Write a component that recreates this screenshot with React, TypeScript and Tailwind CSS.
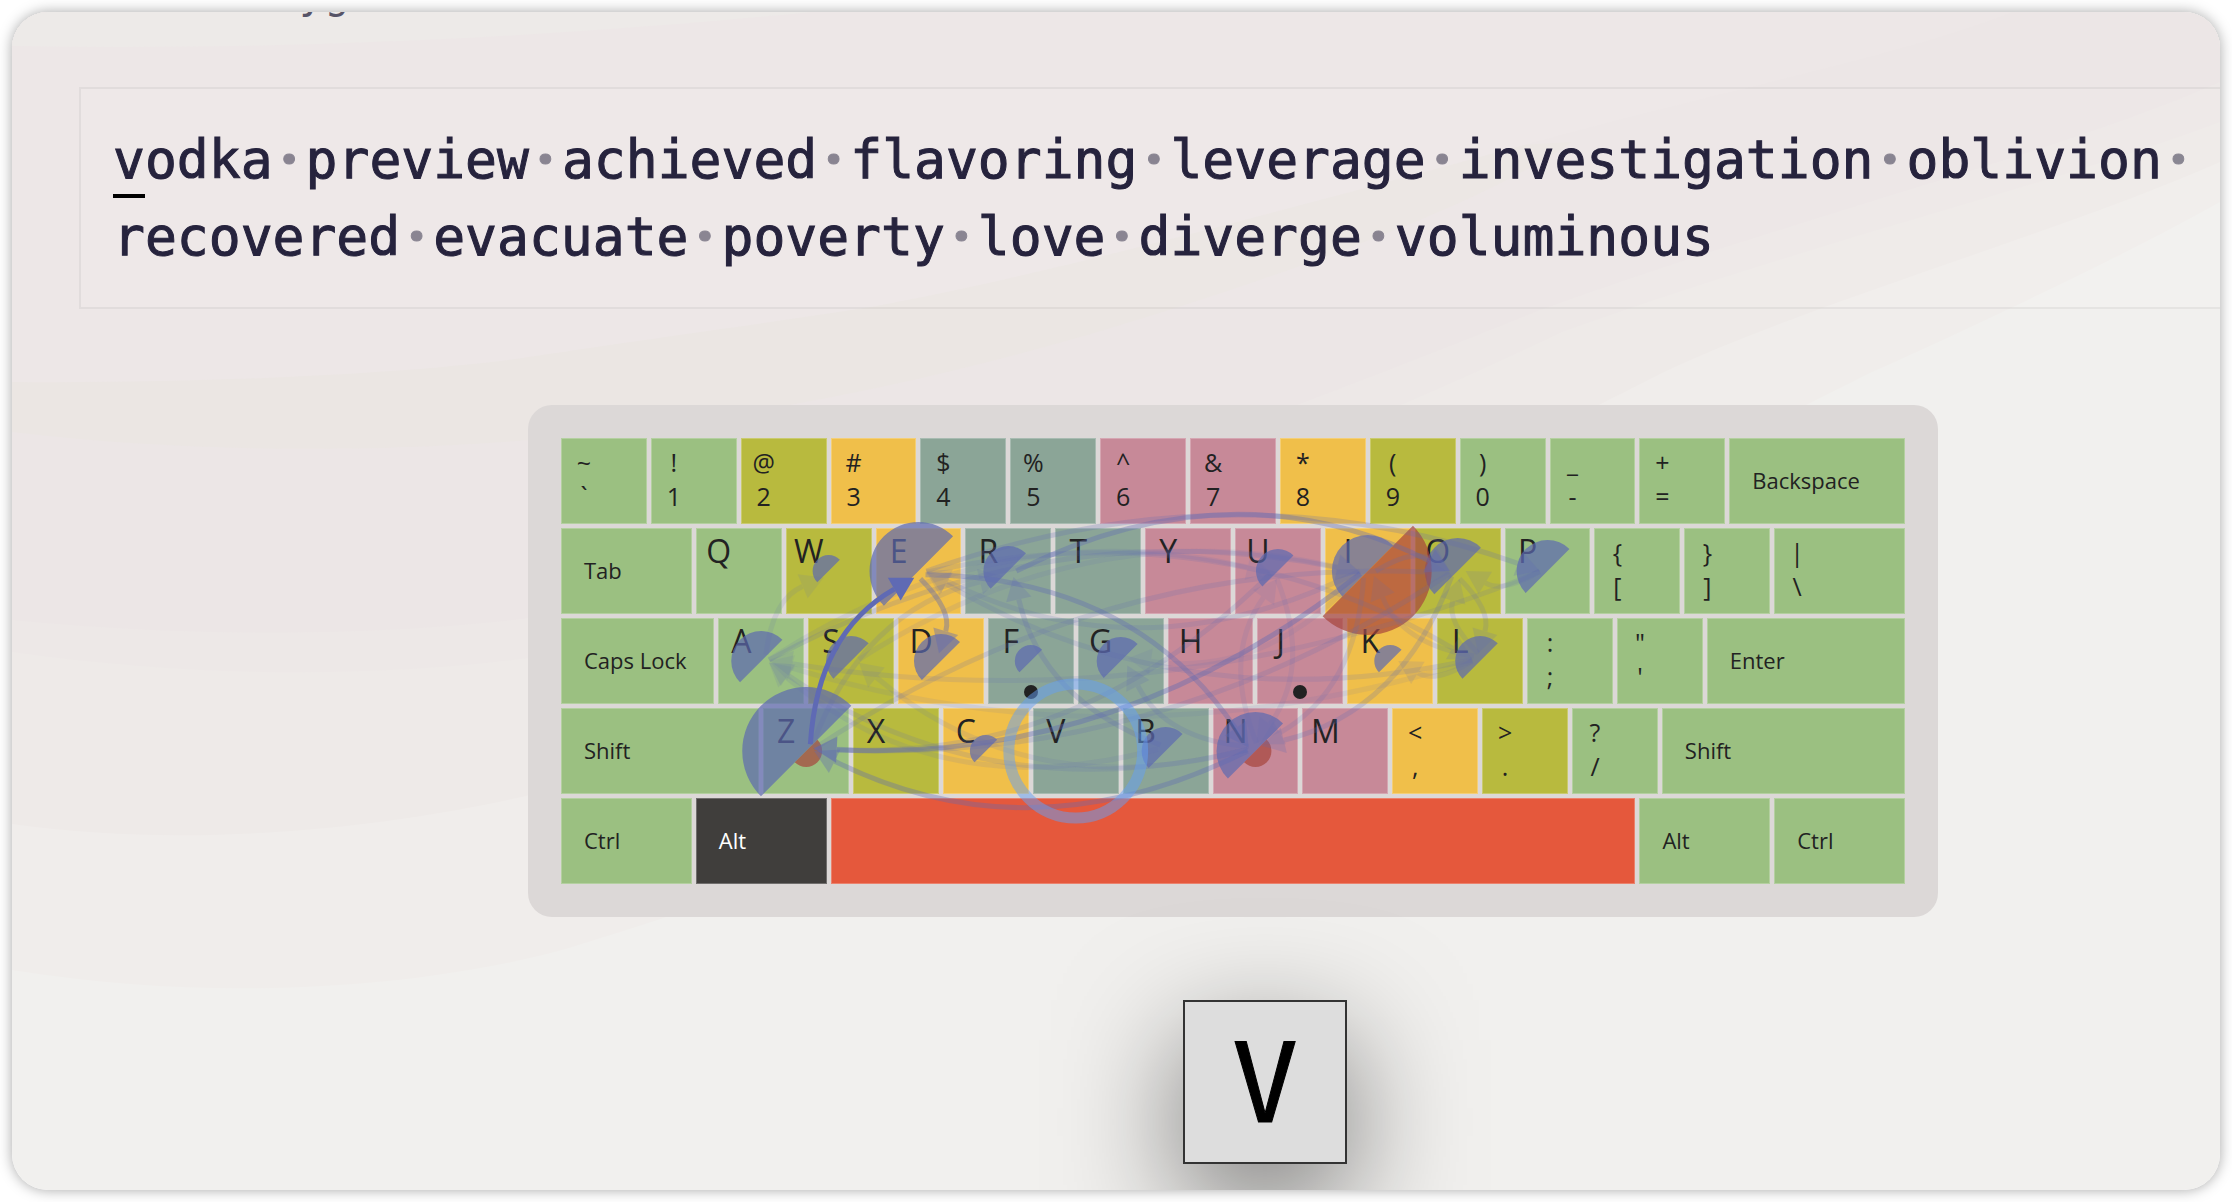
import React from "react";

type Finger = "pinky" | "ring" | "middle" | "indexL" | "indexR" | "thumb" | "held";

type Key = {
  span: number;
  finger: Finger;
  letter?: string;
  pair?: [string, string];
  label?: string;
  bump?: boolean;
};

const fingerClass: Record<Finger, string> = {
  pinky: "bg-[#9bc081] text-[#222]",
  ring: "bg-[#b8ba3e] text-[#222]",
  middle: "bg-[#f0bf4a] text-[#222]",
  indexL: "bg-[#8ba597] text-[#222]",
  indexR: "bg-[#c78998] text-[#222]",
  thumb: "bg-[#e5583c] text-[#222]",
  held: "bg-[#403e3c] text-white font-medium",
};

const spanClass: Record<number, string> = {
  4: "col-span-4",
  6: "col-span-6",
  7: "col-span-7",
  8: "col-span-8",
  9: "col-span-9",
  10: "col-span-10",
  11: "col-span-11",
  36: "col-span-36",
};

const letter = (l: string, finger: Finger, bump = false): Key => ({ span: 4, finger, letter: l, bump });
const pair = (top: string, bottom: string, finger: Finger, span = 4): Key => ({ span, finger, pair: [top, bottom] });
const wide = (label: string, span: number, finger: Finger = "pinky"): Key => ({ span, finger, label });

const rows: Key[][] = [
  [
    pair("~", "`", "pinky"),
    pair("!", "1", "pinky"),
    pair("@", "2", "ring"),
    pair("#", "3", "middle"),
    pair("$", "4", "indexL"),
    pair("%", "5", "indexL"),
    pair("^", "6", "indexR"),
    pair("&", "7", "indexR"),
    pair("*", "8", "middle"),
    pair("(", "9", "ring"),
    pair(")", "0", "pinky"),
    pair("_", "-", "pinky"),
    pair("+", "=", "pinky"),
    wide("Backspace", 8),
  ],
  [
    wide("Tab", 6),
    letter("Q", "pinky"),
    letter("W", "ring"),
    letter("E", "middle"),
    letter("R", "indexL"),
    letter("T", "indexL"),
    letter("Y", "indexR"),
    letter("U", "indexR"),
    letter("I", "middle"),
    letter("O", "ring"),
    letter("P", "pinky"),
    pair("{", "[", "pinky"),
    pair("}", "]", "pinky"),
    pair("|", "\\", "pinky", 6),
  ],
  [
    wide("Caps Lock", 7),
    letter("A", "pinky"),
    letter("S", "ring"),
    letter("D", "middle"),
    letter("F", "indexL", true),
    letter("G", "indexL"),
    letter("H", "indexR"),
    letter("J", "indexR", true),
    letter("K", "middle"),
    letter("L", "ring"),
    pair(":", ";", "pinky"),
    pair('"', "'", "pinky"),
    wide("Enter", 9),
  ],
  [
    wide("Shift", 9),
    letter("Z", "pinky"),
    letter("X", "ring"),
    letter("C", "middle"),
    letter("V", "indexL"),
    letter("B", "indexL"),
    letter("N", "indexR"),
    letter("M", "indexR"),
    pair("<", ",", "middle"),
    pair(">", ".", "ring"),
    pair("?", "/", "pinky"),
    wide("Shift", 11),
  ],
  [wide("Ctrl", 6), wide("Alt", 6, "held"), wide("", 36, "thumb"), wide("Alt", 6), wide("Ctrl", 6)],
];

const UNIT = 90;

const centers: Record<string, [number, number]> = {};
rows.forEach((row, r) => {
  let col = 0;
  row.forEach((key) => {
    if (key.letter) centers[key.letter] = [((col + key.span / 2) / 4) * UNIT, (r + 0.5) * UNIT];
    col += key.span;
  });
});

const hits: [string, number][] = [
  ["W", 16], ["E", 49], ["R", 25], ["U", 22], ["I", 36], ["O", 33], ["P", 31],
  ["A", 30], ["S", 25], ["D", 27], ["F", 16], ["G", 24], ["K", 16], ["L", 25],
  ["Z", 64], ["C", 16], ["B", 24], ["N", 39],
];

const misses: [string, number][] = [["I", 64], ["Z", 16], ["N", 16]];

const bigrams: [string, string, number][] = [
  ["N", "Z", 0.35],
  ["I", "Z", 0.4],
  ["U", "Z", 0.18],
  ["O", "Z", 0.18],
  ["E", "D", 0.4],
  ["R", "O", 0.35],
  ["E", "P", 0.22],
  ["E", "N", 0.35],
  ["A", "W", 0.12],
  ["B", "R", 0.22],
  ["O", "N", 0.22],
  ["I", "N", 0.16],
  ["P", "A", 0.14],
  ["N", "A", 0.16],
  ["B", "A", 0.12],
  ["L", "A", 0.1],
  ["A", "I", 0.18],
  ["A", "U", 0.12],
  ["S", "I", 0.12],
  ["Z", "O", 0.18],
  ["Z", "R", 0.16],
  ["E", "L", 0.16],
  ["L", "E", 0.16],
  ["I", "E", 0.16],
  ["N", "S", 0.12],
  ["L", "I", 0.14],
  ["L", "O", 0.14],
  ["O", "L", 0.16],
  ["P", "O", 0.14],
  ["L", "K", 0.14],
  ["N", "G", 0.18],
  ["U", "N", 0.12],
  ["N", "U", 0.12],
  ["I", "O", 0.22],
  ["I", "G", 0.1],
  ["Z", "E", 1],
];

function halfDisc([x, y]: [number, number], r: number, lower: boolean) {
  const d = r * Math.SQRT1_2;
  return `M${x - d} ${y + d}A${r} ${r} 0 0 ${lower ? 0 : 1} ${x + d} ${y - d}Z`;
}

function Arc({ from, to, strength }: { from: string; to: string; strength: number }) {
  const [ax, ay] = centers[from];
  const [bx, by] = centers[to];
  const len = Math.hypot(bx - ax, by - ay);
  const ux = (bx - ax) / len;
  const uy = (by - ay) / len;
  const bend = Math.min(len / 4, 108);
  const sx = ax + ux * 8;
  const sy = ay + uy * 8;
  const ex = bx - ux * 8;
  const ey = by - uy * 8;
  const cx = (ax + bx) / 2 + uy * bend;
  const cy = (ay + by) / 2 - ux * bend;
  const t = Math.hypot(ex - cx, ey - cy);
  const dx = (ex - cx) / t;
  const dy = (ey - cy) / t;
  const mx = ex - dx * 23;
  const my = ey - dy * 23;
  return (
    <g opacity={strength}>
      <path d={`M${sx} ${sy}Q${cx} ${cy} ${mx} ${my}`} fill="none" stroke="#5f6ab4" strokeWidth={5} />
      <path
        d={`M${ex} ${ey}L${mx - dy * 13} ${my + dx * 13}L${mx + dy * 13} ${my - dx * 13}Z`}
        fill="#5f6ab4"
      />
    </g>
  );
}

function Heatmap() {
  const [vx, vy] = centers.V;
  return (
    <svg
      className="pointer-events-none absolute inset-0 size-full overflow-visible"
      viewBox="0 0 1350 450"
      preserveAspectRatio="none"
      aria-hidden="true"
    >
      {hits.map(([k, r]) => (
        <path key={k} d={halfDisc(centers[k], r, false)} fill="#5d69b0" fillOpacity={0.7} />
      ))}
      {misses.map(([k, r]) => (
        <path key={k} d={halfDisc(centers[k], r, true)} fill="#a6443c" fillOpacity={0.7} />
      ))}
      {bigrams.map(([a, b, s]) => (
        <Arc key={a + b} from={a} to={b} strength={s} />
      ))}
      <circle cx={vx} cy={vy} r={67} fill="none" stroke="#63a0f5" strokeOpacity={0.5} strokeWidth={11} />
    </svg>
  );
}

function KeyCap({ item }: { item: Key }) {
  return (
    <div className={`p-0.5 ${spanClass[item.span]}`}>
      <button
        type="button"
        aria-label={item.label === "" ? "Space" : undefined}
        className={`relative flex size-full border border-white/25 text-left ${fingerClass[item.finger]}`}
      >
        {item.letter && <span className="w-11 pt-1 text-center text-[32px] leading-9">{item.letter}</span>}
        {item.pair && (
          <span className="flex w-11 flex-col pt-1.5 text-center text-[25px] leading-[34px]">
            <span>{item.pair[0]}</span>
            <span>{item.pair[1]}</span>
          </span>
        )}
        {item.label && <span className="self-center pb-0.5 pl-[22px] text-[22px] leading-8">{item.label}</span>}
        {item.bump && <span className="absolute bottom-1 left-1/2 size-3.5 -translate-x-1/2 rounded-full bg-[#222]" />}
      </button>
    </div>
  );
}

const words = [
  "vodka", "preview", "achieved", "flavoring", "leverage", "investigation", "oblivion",
  "recovered", "evacuate", "poverty", "love", "diverge", "voluminous",
];

function Lesson() {
  return (
    <p className="border-2 border-black/5 bg-white/5 p-8 font-['DejaVu_Sans_Mono',monospace] text-[53px] leading-[77px] text-[#26233d] [-webkit-text-stroke:1px_currentColor]">
      {words.map((word, i) => (
        <React.Fragment key={word}>
          <span className="whitespace-nowrap">
            {i === 0 ? (
              <>
                <span className="relative">
                  v
                  <span className="absolute inset-x-0 -bottom-2 h-1 bg-black" />
                </span>
                odka
              </>
            ) : (
              word
            )}
            {i < words.length - 1 && (
              <span className="inline-block w-[33px] text-center font-['Open_Sans',sans-serif] font-extrabold leading-none opacity-50">·</span>
            )}
          </span>
          <wbr />
        </React.Fragment>
      ))}
    </p>
  );
}

function Waves() {
  return (
    <svg
      className="absolute inset-0 -z-10 size-full"
      viewBox="0 0 2208 1178"
      preserveAspectRatio="none"
      aria-hidden="true"
    >
      <rect width="2208" height="1178" fill="#f1f0ee" />
      <path d="M0 958C230 995 440 970 560 935C1000 800 1300 640 1860 360C1950 320 2120 240 2208 190V0H0Z" fill="#f0edeb" />
      <path d="M0 812C200 840 400 810 518 783C900 700 1300 540 1650 361C1800 290 2050 220 2208 150V0H0Z" fill="#eeeae8" />
      <path d="M0 640C200 668 380 664 517 646C900 600 1300 440 1550 320C1800 230 2050 170 2208 110V0H0Z" fill="#ede8e7" />
      <path d="M0 608C180 626 380 624 517 606C850 560 1200 430 1528 298C1800 200 2050 140 2208 70V0H0Z" fill="#ece6e6" />
      <path d="M0 420C200 444 400 438 517 428C700 410 900 380 1157 298C1400 220 1500 170 1560 130L1215 150H0Z" fill="#ebe6e3" />
      <path d="M0 370C250 372 450 356 517 345C650 325 750 312 859 295C1050 260 1300 190 1560 120C1750 70 1900 40 2000 0H0Z" fill="#ede7e7" />
      <path d="M0 34C300 40 600 20 800 0H0Z" fill="#edeae8" />
    </svg>
  );
}

export default function App() {
  return (
    <div className="flex min-h-screen flex-col bg-white p-3 font-['Open_Sans',sans-serif]">
      <main className="relative isolate flex-1 overflow-hidden rounded-[36px] shadow-[0_0_14px_rgba(0,0,0,0.35)]">
        <Waves />
        <div className="-mr-[167px] ml-[67px]">
          <div className="flex h-[75px] items-start">
            <span className="-mt-[38px] ml-[220px] font-['DejaVu_Sans_Mono',monospace] text-[42px] leading-10 text-[#26233d]/75">
              yg
            </span>
          </div>
          <Lesson />
          <div className="mt-24 flex justify-center">
            <section aria-label="Keyboard" className="w-[1410px] rounded-3xl bg-[#dcd8d7] p-[31px]">
              <div className="relative">
                {rows.map((row, i) => (
                  <div key={i} className="grid h-[90px] grid-cols-60">
                    {row.map((item, j) => (
                      <KeyCap key={j} item={item} />
                    ))}
                  </div>
                ))}
                <Heatmap />
              </div>
            </section>
          </div>
          <div className="mt-[83px] flex justify-center pl-16">
            <div className="flex size-[164px] items-center justify-center border-2 border-[#333] bg-[#ddd] pt-1 font-['DejaVu_Sans_Mono',monospace] text-[110px] leading-none text-black shadow-[0_40px_120px_rgba(0,0,0,0.5)] [-webkit-text-stroke:1px_currentColor]">
              V
            </div>
          </div>
        </div>
      </main>
    </div>
  );
}
